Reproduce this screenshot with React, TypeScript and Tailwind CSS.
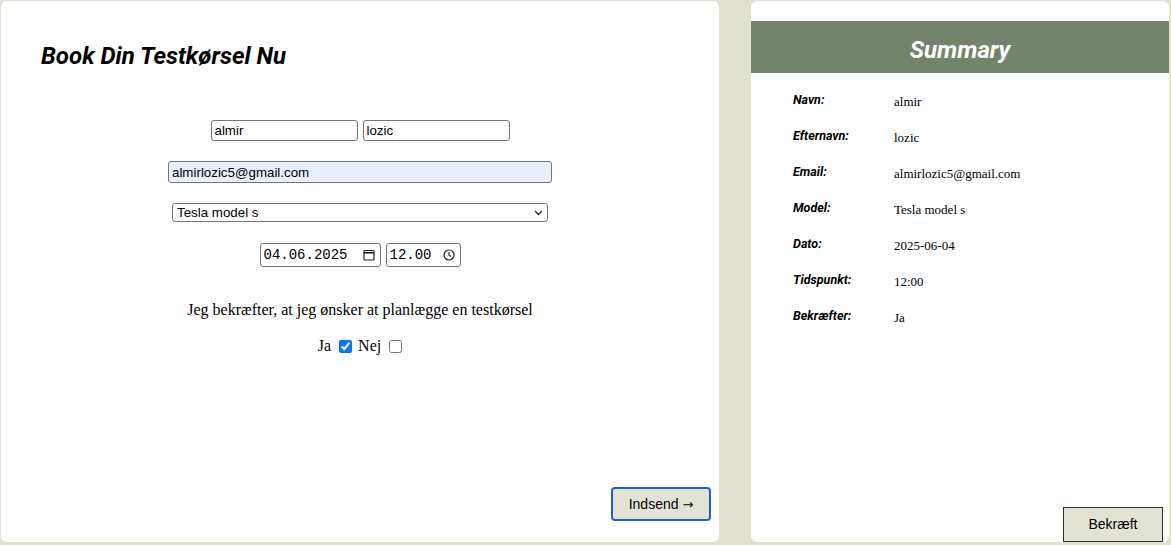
import React from 'react';

const summary: [string, string][] = [
  ['Navn:', 'almir'],
  ['Efternavn:', 'lozic'],
  ['Email:', 'almirlozic5@gmail.com'],
  ['Model:', 'Tesla model s'],
  ['Dato:', '2025-06-04'],
  ['Tidspunkt:', '12:00'],
  ['Bekræfter:', 'Ja'],
];

const inputCls =
  "h-[21px] border border-[#767676] rounded-[3px] px-[3px] text-[13.33px] text-black font-['Liberation_Sans',Arial,sans-serif] outline-none";

export default function App() {
  return (
    <div className="flex h-[545px] w-full bg-[#e1e1d2] pt-[1px] pl-[1px] pr-[2px] pb-[3px] gap-[32px]">
      {/* Booking form */}
      <div className="relative flex w-[718px] flex-col rounded-[6px] bg-white">
        <h1 className="pl-[40px] pt-[41px] text-[24px] font-bold italic leading-[28px] text-black font-['Roboto',sans-serif]">
          Book Din Testkørsel Nu
        </h1>

        <div className="mt-[50px] flex flex-col items-center">
          <div className="flex gap-[5px]">
            <input className={`${inputCls} w-[147px]`} defaultValue="almir" />
            <input className={`${inputCls} w-[147px]`} defaultValue="lozic" />
          </div>

          <input
            className={`${inputCls} mt-[20px] h-[22px] w-[384px] bg-[#e8f0fe]`}
            defaultValue="almirlozic5@gmail.com"
          />

          <div className="relative mt-[20px] w-[376px]">
            <select className="block h-[19px] w-full appearance-none rounded-[3px] border border-[#767676] bg-white pl-[4px] text-[13.33px] leading-[17px] text-black font-['Liberation_Sans',Arial,sans-serif] outline-none">
              <option>Tesla model s</option>
            </select>
            <svg className="pointer-events-none absolute right-[5px] top-[7px]" width="9" height="6" viewBox="0 0 9 6" fill="none">
              <path d="M1 1l3.5 3.5L8 1" stroke="#222" strokeWidth="1.3" />
            </svg>
          </div>

          <div className="mt-[21px] flex gap-[5px]">
            <div className="flex h-[24px] w-[121px] items-center justify-between rounded-[3px] border border-[#767676] pl-[3px] pr-[5px]">
              <span className="text-[14px] text-black font-['Liberation_Mono',monospace]">04.06.2025</span>
              <svg width="12" height="12" viewBox="0 0 12 12" fill="none">
                <rect x="1" y="1.5" width="10" height="9.5" rx="1" stroke="#222" strokeWidth="1.2" />
                <path d="M1 3.8h10" stroke="#222" strokeWidth="1.6" />
              </svg>
            </div>
            <div className="flex h-[24px] w-[75px] items-center justify-between rounded-[3px] border border-[#767676] pl-[3px] pr-[5px]">
              <span className="text-[14px] text-black font-['Liberation_Mono',monospace]">12.00</span>
              <svg width="12" height="12" viewBox="0 0 12 12" fill="none">
                <circle cx="6" cy="6" r="5" stroke="#222" strokeWidth="1.2" />
                <path d="M6 3v3.2l2 1.3" stroke="#222" strokeWidth="1.2" />
              </svg>
            </div>
          </div>

          <p className="mt-[33px] text-[16px] leading-[20px] text-black font-['Liberation_Serif','Times_New_Roman',serif]">
            Jeg bekræfter, at jeg ønsker at planlægge en testkørsel
          </p>

          <div className="mt-[16px] flex items-center text-[16px] leading-[20px] text-black font-['Liberation_Serif','Times_New_Roman',serif]">
            <span>Ja</span>
            <input type="checkbox" defaultChecked className="ml-[8px] mr-[6px] h-[13px] w-[13px] accent-[#0075ff]" />
            <span>Nej</span>
            <input type="checkbox" className="ml-[8px] h-[13px] w-[13px]" />
          </div>
        </div>

        <button className="absolute bottom-[21px] right-[8px] h-[34px] w-[100px] rounded-[4px] border-2 border-[#1a5fd6] bg-[#e3e3d5] text-[14px] text-black font-['Liberation_Sans',Arial,sans-serif]">
          Indsend <span className="font-['DejaVu_Sans',sans-serif] text-[13px]">→</span>
        </button>
      </div>

      {/* Summary */}
      <div className="relative flex flex-1 flex-col rounded-[6px] bg-white pt-[20px]">
        <div className="flex h-[52px] items-center justify-center bg-[#73846a] pt-[6px]">
          <h2 className="text-[24px] font-bold italic text-white font-['Roboto',sans-serif]">Summary</h2>
        </div>

        <div className="mt-[19px] flex flex-col gap-[15px] pl-[42px]">
          {summary.map(([label, value]) => (
            <div key={label} className="flex h-[21px] items-start">
              <span className="w-[101px] text-[12.5px] font-bold italic leading-[16px] text-black font-['Roboto',sans-serif]">
                {label}
              </span>
              <span className="pt-[2px] text-[13px] leading-[16px] text-black font-['Liberation_Serif','Times_New_Roman',serif]">
                {value}
              </span>
            </div>
          ))}
        </div>

        <button className="absolute bottom-0 right-[6px] h-[35px] w-[100px] border border-[#333] bg-[#e3e3d5] text-[14px] text-black font-['Liberation_Sans',Arial,sans-serif]">
          Bekræft
        </button>
      </div>
    </div>
  );
}
